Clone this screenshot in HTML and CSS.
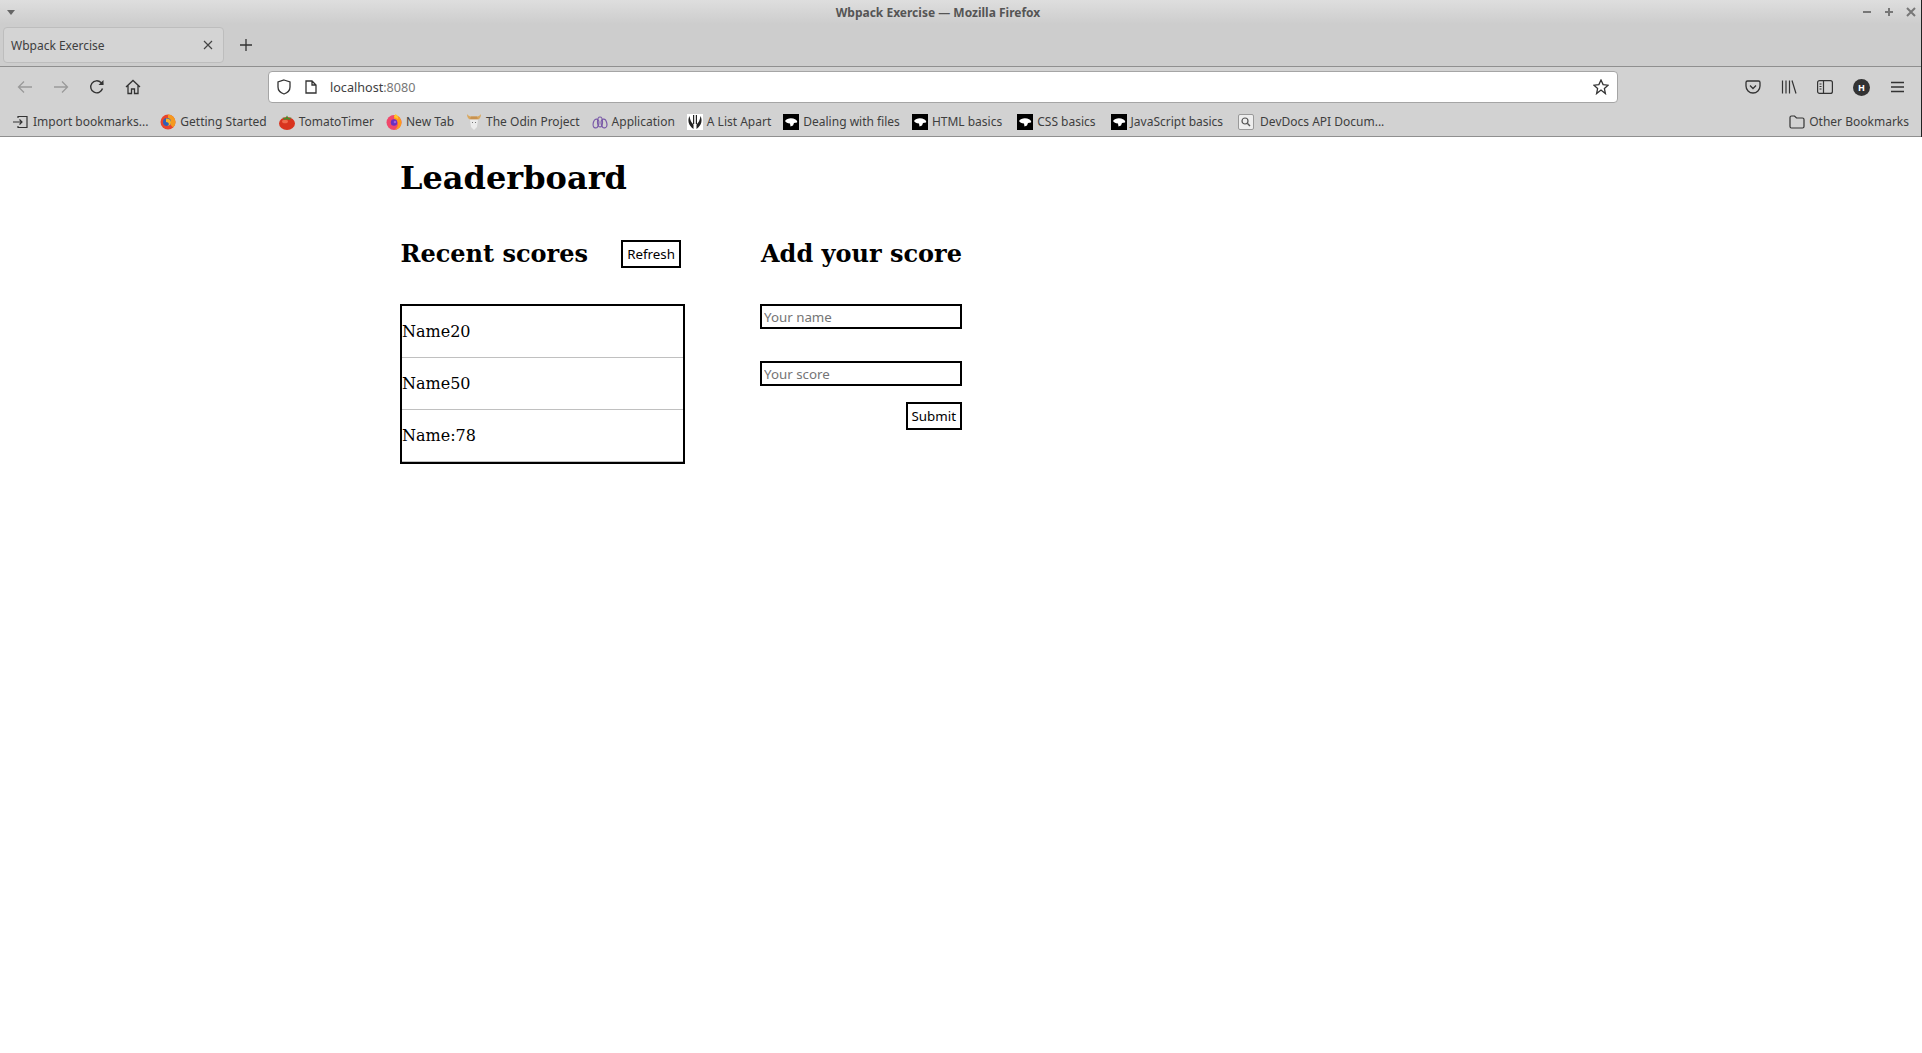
FILE: index.html
```html
<!DOCTYPE html>
<html lang="en">
<head>
    <meta charset="UTF-8">
    <title>Wbpack Exercise</title>
    <link rel="stylesheet" href="styles.css">
</head>
<body>
    <div class="browser">
        <div class="titlebar">
            <svg class="menu-arrow" width="8" height="5" viewBox="0 0 8 5"><path d="M0 0h8L4 5z" fill="#666"/></svg>
            <span class="title-text">Wbpack Exercise — Mozilla Firefox</span>
            <div class="win-buttons">
                <svg width="12" height="12" viewBox="0 0 12 12"><path d="M2 6h8" stroke="#777" stroke-width="2"/></svg>
                <svg width="12" height="12" viewBox="0 0 12 12"><path d="M2 6h8M6 2v8" stroke="#777" stroke-width="2"/></svg>
                <svg width="12" height="12" viewBox="0 0 12 12"><path d="M2 2l8 8M10 2l-8 8" stroke="#777" stroke-width="2"/></svg>
            </div>
        </div>

        <div class="tabbar">
            <div class="tab">
                <span>Wbpack Exercise</span>
                <svg width="10" height="10" viewBox="0 0 10 10"><path d="M1 1l8 8M9 1l-8 8" stroke="#444" stroke-width="1.2"/></svg>
            </div>
            <svg class="new-tab" width="12" height="12" viewBox="0 0 12 12"><path d="M6 0v12M0 6h12" stroke="#333" stroke-width="1.3"/></svg>
        </div>

        <div class="navbar">
            <svg class="nav-icon" width="16" height="16" viewBox="0 0 16 16" fill="none" stroke="#9a9a9a" stroke-width="1.3"><path d="M15 8H1.500M7 2.500L1.500 8 7 13.500"/></svg>
            <svg class="nav-icon" width="16" height="16" viewBox="0 0 16 16" fill="none" stroke="#9a9a9a" stroke-width="1.3"><path d="M1 8h13.500M9 2.500L14.500 8 9 13.500"/></svg>
            <svg class="nav-icon" width="16" height="16" viewBox="0 0 16 16" fill="none" stroke="#333" stroke-width="1.4"><path d="M13.500 9.500A6 6 0 1 1 12 3.600L14 5.500"/><path d="M14.500 1v5h-5" fill="#333" stroke="none"/></svg>
            <svg class="nav-icon" width="16" height="16" viewBox="0 0 16 16" fill="none" stroke="#333" stroke-width="1.3"><path d="M1 8l7-6.500L15 8M3 6.500V14.500h3.500V10h3v4.500H13V6.500"/></svg>
            <div class="urlbar">
                <svg width="14" height="16" viewBox="0 0 14 16" fill="none" stroke="#333" stroke-width="1.3"><path d="M7 1l6 2v5c0 3.500-3 6-6 7-3-1-6-3.500-6-7V3z"/></svg>
                <svg class="page-icon" width="12" height="14" viewBox="0 0 12 14" fill="none" stroke="#333" stroke-width="1.3"><path d="M1 1h6l4 4v8H1zM7 1v4h4"/></svg>
                <span class="url">localhost<span class="url-port">:8080</span></span>
                <svg class="star" width="16" height="16" viewBox="0 0 16 16" fill="none" stroke="#333" stroke-width="1.3"><path d="M8 1l2.100 4.600 5 .6-3.700 3.400 1 5L8 11.100 3.600 14.600l1-5L.9 6.200l5-.6z"/></svg>
            </div>
            <div class="nav-right">
                <svg width="16" height="16" viewBox="0 0 16 16" fill="none" stroke="#333" stroke-width="1.3"><path d="M2.500 2h11A1.500 1.500 0 0 1 15 3.500V7A7 7 0 0 1 1 7V3.500A1.500 1.500 0 0 1 2.500 2z"/><path d="M5 6.500l3 3 3-3"/></svg>
                <svg width="16" height="16" viewBox="0 0 16 16" fill="none" stroke="#333" stroke-width="1.2"><path d="M1.500 1.500v13M5 1.500v13M8.500 1.500v13M11 1.500l4 13"/></svg>
                <svg width="16" height="14" viewBox="0 0 16 14" fill="none" stroke="#333" stroke-width="1.2"><rect x=".6" y=".6" width="14.800" height="12.800" rx="2"/><path d="M6.500 .6v12.800M2.500 4h2M2.500 6.500h2M2.500 9h2"/></svg>
                <span class="avatar">H</span>
                <svg width="16" height="12" viewBox="0 0 16 12" fill="none" stroke="#333" stroke-width="1.3"><path d="M1 1.500h13M1 6h13M1 10.500h13"/></svg>
            </div>
        </div>

        <div class="bookmarks">
            <span class="bm"><svg width="16" height="14" viewBox="0 0 16 14" fill="none" stroke="#333" stroke-width="1.2"><path d="M5 3V1.500h9v11H5V11M0 7h9M6.500 4.500L9 7l-2.500 2.500"/></svg>Import bookmarks...</span>
            <span class="bm"><svg width="16" height="16" viewBox="0 0 16 16"><circle cx="8" cy="8" r="7.500" fill="#e8452c"/><path d="M8 .5A7.500 7.500 0 0 1 15.500 8c0 2-1 4-2.500 5.500L8 8z" fill="#f59a1f"/><circle cx="7" cy="8" r="4" fill="#2f5fb8"/><path d="M6 4.500c3 0 5 1.500 5 4s-2 3.500-4 3c2 0 2.500-2 1-3L6 8z" fill="#f7b52c"/></svg>Getting Started</span>
            <span class="bm"><svg width="16" height="16" viewBox="0 0 16 16"><ellipse cx="8" cy="9.500" rx="8" ry="6.500" fill="#d9341f"/><ellipse cx="6" cy="7.500" rx="3" ry="1.800" fill="#ef6a4c"/><path d="M3.500 3.500L6.500 4 8 1.500 9.500 4l3-.5L10.500 6 8 5.200 5.500 6z" fill="#4d8a2a"/></svg>TomatoTimer</span>
            <span class="bm"><svg width="16" height="16" viewBox="0 0 16 16"><circle cx="8" cy="8.500" r="7.500" fill="#f0476b"/><path d="M8 1c4 0 7.500 3 7.500 7.500S12 15.500 9 15.500C13 13 13 6 8 5z" fill="#ff9a1c"/><path d="M9.500 0c2 1 3 3 2.500 5L8 3z" fill="#ffc62c"/><circle cx="8" cy="8.500" r="3.200" fill="#6a2fc0"/><circle cx="9" cy="8" r="1.300" fill="#a05ce0"/></svg>New Tab</span>
            <span class="bm"><svg width="16" height="16" viewBox="0 0 16 16"><path d="M1 0c0 3 1 4.500 3 5.500h8C14 4.500 15 3 15 0c-1 1.500-2.500 2.500-4 2.500H5C3.500 2.500 2 1.500 1 0z" fill="#d9a860"/><path d="M5 2.500h6l1 3H4z" fill="#c89250"/><path d="M4 5.500h8L11 13l-3 3-3-3z" fill="#ececec"/><path d="M6 8h1v1H6zM9 8h1v1H9z" fill="#777"/></svg>The Odin Project</span>
            <span class="bm"><svg width="16" height="16" viewBox="0 0 16 16" fill="none" stroke="#7a5aa8" stroke-width="1.200"><ellipse cx="4" cy="9.500" rx="2.800" ry="4.500" transform="rotate(12 4 9.500)"/><ellipse cx="12" cy="9.500" rx="2.800" ry="4.500" transform="rotate(-12 12 9.500)"/><ellipse cx="8" cy="8" rx="2.500" ry="5"/></svg>Application</span>
            <span class="bm"><svg width="16" height="16" viewBox="0 0 16 16"><rect width="16" height="16" fill="#fff"/><path d="M2.500 2C.5 6 1 11 6.500 15V10.500C4.500 9 3 6 2.500 2zM13.500 2c2 4 1.500 9-4 13V10.500C11.500 9 13 6 13.500 2z" fill="#222"/><path d="M6 1h1.200v9H6zM8.800 1H10v9H8.800z" fill="#222"/></svg>A List Apart</span>
            <span class="bm"><svg width="16" height="16" viewBox="0 0 16 16"><rect width="16" height="16" fill="#000"/><path d="M2 7C4 4 9 3.500 12.500 5.500c1.500.8 2 2 1.500 3l-3 .5-1 2.500-2.500 1-.5-3C4.500 9.500 3 8.500 2 7z" fill="#fff"/></svg>Dealing with files</span>
            <span class="bm"><svg width="16" height="16" viewBox="0 0 16 16"><rect width="16" height="16" fill="#000"/><path d="M2 7C4 4 9 3.500 12.500 5.500c1.500.8 2 2 1.500 3l-3 .5-1 2.500-2.500 1-.5-3C4.500 9.500 3 8.500 2 7z" fill="#fff"/></svg>HTML basics</span>
            <span class="bm css"><svg width="16" height="16" viewBox="0 0 16 16"><rect width="16" height="16" fill="#000"/><path d="M2 7C4 4 9 3.500 12.500 5.500c1.500.8 2 2 1.500 3l-3 .5-1 2.500-2.500 1-.5-3C4.500 9.500 3 8.500 2 7z" fill="#fff"/></svg>CSS basics</span>
            <span class="bm js"><svg width="16" height="16" viewBox="0 0 16 16"><rect width="16" height="16" fill="#000"/><path d="M2 7C4 4 9 3.500 12.500 5.500c1.500.8 2 2 1.500 3l-3 .5-1 2.500-2.500 1-.5-3C4.500 9.500 3 8.500 2 7z" fill="#fff"/></svg>JavaScript basics</span>
            <span class="bm docs"><svg width="16" height="16" viewBox="0 0 16 16" fill="none"><rect x=".5" y=".5" width="15" height="15" rx="1.500" fill="#eee" stroke="#999"/><circle cx="7" cy="7" r="3" stroke="#555" stroke-width="1.200"/><path d="M9.500 9.500L12 12" stroke="#555" stroke-width="1.400"/></svg>DevDocs API Docum...</span>
            <span class="bm other"><svg width="16" height="14" viewBox="0 0 16 14" fill="none" stroke="#333" stroke-width="1.200"><path d="M1 2.500A1.500 1.500 0 0 1 2.500 1h3L7.500 3H13.500A1.500 1.500 0 0 1 15 4.500V11.500A1.500 1.500 0 0 1 13.500 13H2.500A1.500 1.500 0 0 1 1 11.500z"/></svg>Other Bookmarks</span>
        </div>
    </div>

    <div class="page">
        <h1>Leaderboard</h1>
        <div class="columns">
            <div class="recent">
                <div class="recent-head">
                    <h2>Recent scores</h2>
                    <button class="btn">Refresh</button>
                </div>
                <ul class="scores">
                    <li>Name20</li>
                    <li>Name50</li>
                    <li>Name:78</li>
                </ul>
            </div>
            <form class="add">
                <h2>Add your score</h2>
                <input class="field" type="text" placeholder="Your name">
                <input class="field" type="text" placeholder="Your score">
                <button class="btn submit" type="button">Submit</button>
            </form>
        </div>
    </div>
</body>
</html>
```

FILE: styles.css
```css
* {
    box-sizing: border-box;
}
body {
    margin: 0;
    background: white;
    color: black;
}
.browser {
    font-family: "Noto Sans", sans-serif;
    font-size: 12px;
    color: #3e3e3e;
    background: #d2d2d2;
    height: 137px;
    border-right: 1px solid #222;
}
.titlebar {
    height: 24px;
    display: flex;
    align-items: center;
    padding: 0 4px 0 7px;
    background: linear-gradient(#dedede, #cdcdcd);
}
.title-text {
    flex: 1;
    text-align: center;
    font-weight: bold;
    color: #555;
}
.win-buttons {
    display: flex;
    gap: 10px;
}
.tabbar {
    height: 43px;
    display: flex;
    align-items: flex-start;
    padding: 3px 0 0 3px;
    background: #cdcdcd;
    border-bottom: 1px solid #8f8f8f;
}
.tab {
    width: 221px;
    height: 36px;
    display: flex;
    align-items: center;
    justify-content: space-between;
    padding: 0 10px 0 7px;
    background: #d4d4d4;
    border: 1px solid #bdbdbd;
    border-radius: 4px;
}
.new-tab {
    margin: 12px 0 0 16px;
}
.navbar {
    height: 40px;
    display: flex;
    align-items: center;
    padding-left: 17px;
}
.nav-icon {
    margin-right: 20px;
}
.urlbar {
    width: 1350px;
    height: 32px;
    margin-left: 107px;
    flex-shrink: 0;
    display: flex;
    align-items: center;
    padding: 0 8px;
    background: white;
    border: 1px solid #a5a5a5;
    border-radius: 4px;
}
.page-icon {
    margin-left: 14px;
}
.url {
    margin-left: 13px;
    font-size: 12.6px;
    flex: 1;
}
.url-port {
    color: #777;
}
.nav-right {
    display: flex;
    align-items: center;
    gap: 20px;
    margin-left: 127px;
}
.avatar {
    width: 17px;
    height: 17px;
    border-radius: 50%;
    background: #333;
    color: white;
    font-size: 9px;
    font-weight: bold;
    display: flex;
    align-items: center;
    justify-content: center;
}
.bookmarks {
    height: 30px;
    display: flex;
    align-items: center;
    gap: 12px;
    padding: 0 12px 0 13px;
    border-bottom: 1px solid #8f8f8f;
}
.bm {
    display: flex;
    align-items: center;
    gap: 4px;
    white-space: nowrap;
}
.css {
    margin-left: 3px;
}
.js {
    margin-left: 3px;
}
.docs {
    margin-left: 3px;
    gap: 6px;
}
.other {
    margin-left: auto;
}
.page {
    font-family: "DejaVu Serif", serif;
    padding-left: 400px;
}
h1 {
    font-size: 32px;
    line-height: 38px;
    margin: 0;
    padding-top: 22px;
    height: 84px;
}
h2 {
    font-size: 24px;
    line-height: 28px;
    margin: 0;
}
.columns {
    display: flex;
    gap: 75px;
}
.recent {
    width: 285px;
}
.recent-head {
    display: flex;
    align-items: center;
    justify-content: space-between;
    padding: 0 4px 18px 0.5px;
    height: 83px;
}
.btn {
    font-family: "Noto Sans", sans-serif;
    font-size: 13.33px;
    background: white;
    color: black;
    border: 2px solid black;
    padding: 1px 4px;
    height: 28px;
}
.scores {
    list-style: none;
    margin: 0;
    padding: 0;
    border: 2px solid black;
}
.scores li {
    height: 52px;
    font-size: 16px;
    display: flex;
    align-items: center;
    padding-bottom: 1px;
    border-bottom: 1px solid #c0c0c0;
}
.add {
    width: 202px;
    display: flex;
    flex-direction: column;
}
.add h2 {
    height: 83px;
    padding: 0 0 18px 1px;
    display: flex;
    align-items: center;
    white-space: nowrap;
}
.field {
    font-family: "Noto Sans", sans-serif;
    font-size: 13.33px;
    height: 25px;
    border: 2px solid black;
    padding: 1px 2px;
    margin-bottom: 32px;
}
.field::placeholder {
    color: #757575;
}
.submit {
    align-self: flex-end;
    margin-top: -16px;
}
```
